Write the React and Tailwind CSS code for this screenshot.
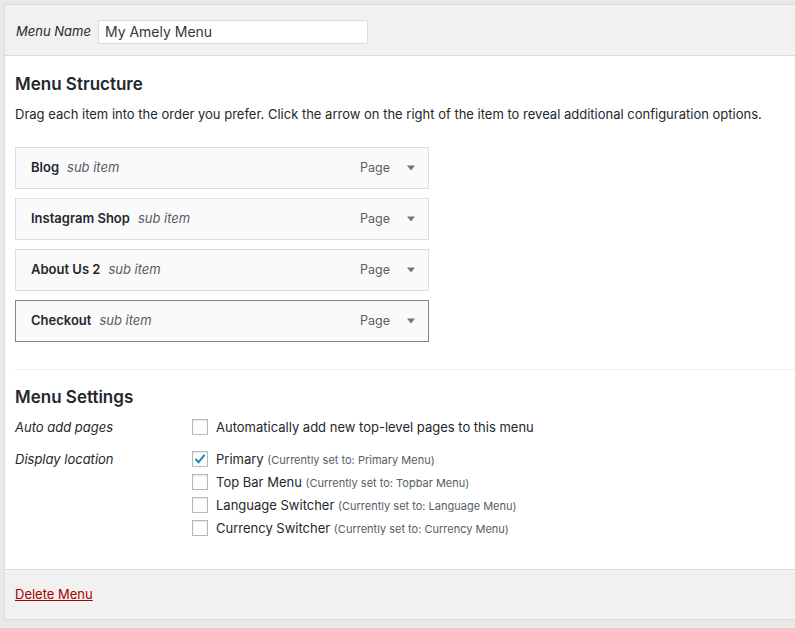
import React from "react";

const items = [
  { title: "Blog", active: false },
  { title: "Instagram Shop", active: false },
  { title: "About Us 2", active: false },
  { title: "Checkout", active: true },
];

const locations = [
  { name: "Primary", note: "(Currently set to: Primary Menu)", checked: true },
  { name: "Top Bar Menu", note: "(Currently set to: Topbar Menu)", checked: false },
  { name: "Language Switcher", note: "(Currently set to: Language Menu)", checked: false },
  { name: "Currency Switcher", note: "(Currently set to: Currency Menu)", checked: false },
];

function Checkbox({ checked }) {
  return (
    <span className="flex h-4 w-4 shrink-0 items-center justify-center border border-[#b4b9be] bg-white shadow-[inset_0_1px_2px_rgba(0,0,0,0.1)]">
      {checked && (
        <svg width="14" height="14" viewBox="0 0 20 20">
          <path d="M3.5 10 L8 14.5 L16.5 4" fill="none" stroke="#1e8cbe" strokeWidth="3" />
        </svg>
      )}
    </span>
  );
}

export default function App() {
  return (
    <div className="min-h-[628px] bg-[#e9e9e9] pl-[4px] pt-[4px] text-[13px] text-[#23282d] [font-family:Inter,'Liberation_Sans',sans-serif]">
      <div className="w-[900px] border border-[#dcdcdc] bg-white">
        <div className="flex h-[51px] items-center gap-[7px] border-b border-[#dcdcdc] bg-[#f1f1f1] pl-[11px] pt-[3px]">
          <span className="italic">Menu Name</span>
          <div className="flex h-[24px] w-[270px] items-center border border-[#dcdcdc] bg-white px-[6px] text-[14px] text-[#32373c]">
            My Amely Menu
          </div>
        </div>
        <div className="h-[513px] pl-[10px] pt-[17px]">
          <h3 className="text-[17px] font-semibold leading-[22px]">Menu Structure</h3>
          <p className="mt-[10px] leading-[18px]">
            Drag each item into the order you prefer. Click the arrow on the right of the item to reveal additional configuration options.
          </p>
          <div className="mt-[24px] flex w-[414px] flex-col gap-[9px]">
            {items.map((it) => (
              <div
                key={it.title}
                className={`flex h-[42px] items-center border bg-[#fafafa] pl-[15px] pr-[13px] ${it.active ? "border-[#7e8993]" : "border-[#dddddd]"}`}
              >
                <span className="font-semibold">{it.title}</span>
                <span className="ml-[8px] italic text-[#555d66]">sub item</span>
                <span className="ml-auto text-[12.5px] text-[#555d66]">Page</span>
                <svg className="ml-[17px]" width="8" height="8" viewBox="0 0 8 8">
                  <path d="M0 1.5 L8 1.5 L4 6.5 Z" fill="#72777c" />
                </svg>
              </div>
            ))}
          </div>
          <div className="mt-[27px] border-t border-[#eeeeee]" />
          <h3 className="mt-[16px] text-[17px] font-semibold leading-[22px]">Menu Settings</h3>
          <div className="mt-[10px] flex">
            <div className="w-[177px] italic leading-[18px]">Auto add pages</div>
            <label className="flex h-[18px] items-center gap-[8px] leading-[18px]">
              <Checkbox checked={false} />
              <span>Automatically add new top-level pages to this menu</span>
            </label>
          </div>
          <div className="mt-[14px] flex">
            <div className="w-[177px] italic leading-[18px]">Display location</div>
            <div className="flex flex-col gap-[5px]">
              {locations.map((l) => (
                <label key={l.name} className="flex h-[18px] items-center gap-[8px] leading-[18px]">
                  <Checkbox checked={l.checked} />
                  <span>
                    {l.name} <span className="text-[11px] text-[#555d66]">{l.note}</span>
                  </span>
                </label>
              ))}
            </div>
          </div>
        </div>
        <div className="flex h-[50px] items-center border-t border-[#dcdcdc] bg-[#f1f1f1] pl-[10px]">
          <a href="#" className="text-[#a00] underline">Delete Menu</a>
        </div>
      </div>
    </div>
  );
}
